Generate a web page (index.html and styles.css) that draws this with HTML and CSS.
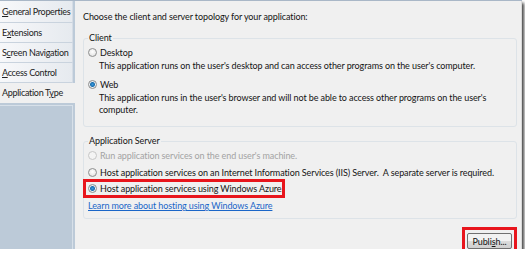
FILE: index.html
```html
<!DOCTYPE html>
<html lang="en">
<head>
    <meta charset="UTF-8">
    <title>Application Type</title>
    <link rel="stylesheet" href="styles.css">
</head>
<body>
    <div class="window">
        <div class="topbar"></div>
        <div class="body">
            <nav class="tabs">
                <div class="tab first"><u>G</u>eneral Properties</div>
                <div class="tab">E<u>x</u>tensions</div>
                <div class="tab">S<u>c</u>reen Navigation</div>
                <div class="tab"><u>A</u>ccess Control</div>
                <div class="tab active">Application T<u>y</u>pe</div>
                <div class="tabs-fill"></div>
            </nav>

            <main class="panel">
                <p class="intro">Choose the client and server topology for your application:</p>

                <fieldset class="group client">
                    <legend>Client</legend>
                    <div class="option">
                        <span class="radio"></span>
                        <span>Desktop</span>
                    </div>
                    <p class="desc">This application runs on the user's desktop and can access other programs on the user's computer.</p>
                    <div class="option">
                        <span class="radio checked"></span>
                        <span>Web</span>
                    </div>
                    <p class="desc">This application runs in the user's browser and will not be able to access other programs on the user's computer.</p>
                </fieldset>

                <fieldset class="group server">
                    <legend>Application Server</legend>
                    <div class="option disabled">
                        <span class="radio"></span>
                        <span>Run application services on the end user's machine.</span>
                    </div>
                    <div class="option">
                        <span class="radio"></span>
                        <span>Host application services on an Internet Information Services (IIS) Server.&nbsp; A separate server is required.</span>
                    </div>
                    <div class="option marked">
                        <span class="radio checked"></span>
                        <span>Host application services using Windows Azure.</span>
                    </div>
                    <a class="learn" href="#">Learn more about hosting using Windows Azure</a>
                </fieldset>

                <div class="actions">
                    <span class="publish-mark"><button class="btn">Publi<u>s</u>h...</button></span>
                </div>
            </main>
        </div>
    </div>
</body>
</html>
```

FILE: styles.css
```css
* {
    margin: 0;
    padding: 0;
    box-sizing: border-box;
}

body {
    background: #ffffff;
    font-family: 'Lato', 'Open Sans', sans-serif;
    font-size: 9px;
    letter-spacing: -0.1px;
    color: #141414;
}

.window {
    width: 522px;
    height: 249px;
    background: #bccad8;
    box-shadow: 2px 3px 3px rgba(0,0,0,0.75);
    display: flex;
    flex-direction: column;
}

.topbar {
    height: 4px;
    background: #c3cedc;
    border-bottom: 1px solid #a9b7c7;
}

.body {
    flex: 1;
    display: flex;
}

/* left tab strip */
.tabs {
    width: 75px;
    display: flex;
    flex-direction: column;
}

.tab {
    height: 20px;
    width: 73px;
    line-height: 19px;
    padding-left: 2px;
    background: linear-gradient(to right, #f7f8fa, #e6eaef);
    border-bottom: 1px solid #c9d3de;
    border-right: 1px solid #d5dce5;
    white-space: nowrap;
    letter-spacing: -0.3px;
    color: #222;
}

.tab.first {
    height: 22px;
    line-height: 21px;
}

.tab.active {
    width: 75px;
    height: 20px;
    line-height: 19px;
    background: #f0f0f0;
    border: none;
}

.tabs-fill {
    flex: 1;
    margin: 2px 2px 2px 0;
    border: 1px solid #d7e0e9;
    border-left: none;
    background: #bccad8;
}

/* right content panel */
.panel {
    flex: 1;
    background: #f0f0f0;
    border-right: 1px solid #d9d9d9;
    padding: 10px 4px 0 8px;
    display: flex;
    flex-direction: column;
}

.intro {
    line-height: 12px;
    margin-bottom: 9px;
}

.group {
    border: 1px solid #dde3e8;
    border-radius: 3px;
    padding: 0 4px 6px 4px;
    margin-bottom: 8px;
}

.group.server {
    padding-bottom: 5px;
}

.group legend {
    padding: 0 1px;
    line-height: 12px;
}

.option {
    display: flex;
    align-items: center;
    gap: 3px;
    height: 17px;
    white-space: nowrap;
}

.client .option {
    height: 16px;
}

.option.disabled {
    color: #a3a3a3;
}

.option.marked {
    outline: 3px solid #e8151c;
    margin: 1px 0 0 -2px;
    padding-left: 2px;
    width: 196px;
    height: 13px;
}

.radio {
    width: 9px;
    height: 9px;
    border-radius: 50%;
    border: 1px solid #8e8f8f;
    background: radial-gradient(circle at 50% 40%, #ffffff, #dcdcdc);
    flex: none;
}

.disabled .radio {
    border-color: #c6c6c6;
    background: #f4f4f4;
}

.radio.checked {
    background: radial-gradient(circle, #3a9be0 0, #1c6fae 2px, #eef2f6 3px, #d8d8d8 4px);
}

.desc {
    padding-left: 11px;
    line-height: 12px;
    margin-bottom: 4px;
}

.server .learn {
    margin-top: 4px;
}

.learn {
    color: #1a66c8;
    line-height: 14px;
    display: inline-block;
    width: max-content;
}

.actions {
    margin-top: auto;
    display: flex;
    justify-content: flex-end;
}

.publish-mark {
    border: 3px solid #e8151c;
    padding: 3px 2px 2px 2px;
}

.btn {
    display: block;
    font-family: inherit;
    font-size: 9px;
    letter-spacing: -0.1px;
    color: #141414;
    width: 45px;
    height: 16px;
    border: 1px solid #707070;
    border-radius: 2px;
    background: linear-gradient(#f2f2f2 50%, #dddddd 50%, #cfcfcf);
}
```
